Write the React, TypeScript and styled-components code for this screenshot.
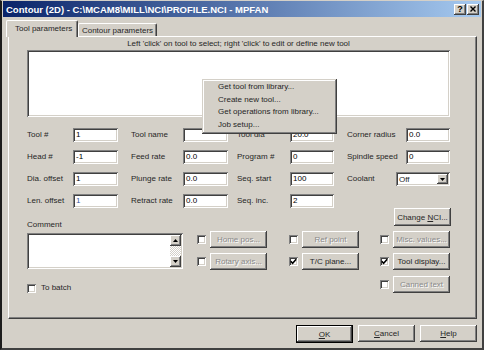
import styled, { createGlobalStyle, css } from 'styled-components'

const GlobalStyle = createGlobalStyle`
  html, body {
    margin: 0;
    padding: 0;
    background: #d4d0c8;
  }
  body {
    font-family: "Liberation Sans", Arial, sans-serif;
    font-size: 8px;
    color: #262626;
  }
`

const raised = css`
  background: #d4d0c8;
  box-shadow: inset -1px -1px #404040, inset 1px 1px #ffffff, inset -2px -2px #808080, inset 2px 2px #d4d0c8;
`

const sunken = css`
  background: #fff;
  box-shadow: inset 1px 1px #808080, inset -1px -1px #ffffff, inset 2px 2px #404040, inset -2px -2px #d4d0c8;
`

const Window = styled.div`
  width: 484px;
  height: 350px;
  box-sizing: border-box;
  background: #d4d0c8;
  border-top: 1px solid #d4d0c8;
  border-left: 2px solid #1c1c1c;
  border-right: 2px solid #404040;
  border-bottom: 2px solid #404040;
  display: flex;
  flex-direction: column;
  overflow: hidden;
`

const TitleBar = styled.div`
  height: 16px;
  margin: 0 1px;
  padding: 0 2px 0 3px;
  background: linear-gradient(to right, #0a246a, #a6caf0);
  display: flex;
  align-items: center;
  justify-content: space-between;
`

const TitleText = styled.span`
  color: #fff;
  font-weight: bold;
  font-size: 9.5px;
  white-space: nowrap;
`

const CaptionButtons = styled.div`
  display: flex;
  gap: 1px;
`

const CaptionButton = styled.div`
  ${raised}
  width: 12px;
  height: 11px;
  display: flex;
  align-items: center;
  justify-content: center;
  font-weight: bold;
  font-size: 9px;
  line-height: 11px;
  color: #000;
`

const Body = styled.div`
  flex: 1;
  display: flex;
  flex-direction: column;
  padding: 0 5px 5px 6px;
`

const TabStrip = styled.div`
  height: 19px;
  display: flex;
  align-items: flex-end;
  margin-left: -2px;
`

const Tab = styled.div<{ $active?: boolean }>`
  box-sizing: border-box;
  background: #d4d0c8;
  border-top: 1px solid #fff;
  border-left: 1px solid #fff;
  border-right: 1px solid #404040;
  border-radius: 2px 2px 0 0;
  box-shadow: inset -1px 0 #808080;
  white-space: nowrap;
  ${p =>
    p.$active
      ? css`
          width: 72px;
          height: 17px;
          margin-bottom: -1px;
          padding: 3px 0 0 8px;
          position: relative;
          z-index: 1;
        `
      : css`
          width: 79px;
          height: 13px;
          padding-top: 2px;
          text-align: center;
        `}
`

const Panel = styled.div`
  flex: 1;
  position: relative;
  display: flex;
  flex-direction: column;
  padding: 0 26px 0 18px;
  border-top: 1px solid #fff;
  border-left: 1px solid #fff;
  border-right: 1px solid #404040;
  border-bottom: 1px solid #404040;
  box-shadow: inset -1px -1px #808080;
`

const Hint = styled.div`
  margin-top: 2px;
  height: 10px;
  line-height: 10px;
  text-align: center;
  white-space: nowrap;
`

const ToolList = styled.div`
  ${sunken}
  margin-top: 1px;
  height: 67px;
`

const FormGrid = styled.div`
  margin-top: 11px;
  display: grid;
  grid-template-columns: 46px 58px 52px 54px 53px 57px 49px 54px;
  grid-auto-rows: 14px;
  row-gap: 8px;
  align-items: center;
`

const Label = styled.span`
  line-height: 14px;
  white-space: nowrap;
`

const Field = styled.div<{ $w: number; $end?: boolean; $tint?: boolean }>`
  ${sunken}
  box-sizing: border-box;
  width: ${p => p.$w}px;
  height: 14px;
  padding: 2px 0 0 3px;
  line-height: 10px;
  color: ${p => (p.$tint ? '#3a5a9a' : '#000')};
  justify-self: ${p => (p.$end ? 'end' : 'start')};
`

const Select = styled.div`
  ${sunken}
  box-sizing: border-box;
  width: 54px;
  height: 14px;
  display: flex;
  align-items: center;
  padding: 0 2px 0 3px;
  justify-content: space-between;
`

const DropButton = styled.div`
  ${raised}
  width: 11px;
  height: 10px;
  display: flex;
  align-items: center;
  justify-content: center;
`

const Lower = styled.div`
  display: grid;
  grid-template-columns: 170px 92px 91px 71px;
  grid-template-rows: 18px 17px 17px 18px;
  row-gap: 5px;
  align-items: center;
`

const CommentColumn = styled.div`
  grid-column: 1;
  grid-row: 1 / 5;
  align-self: stretch;
  display: flex;
  flex-direction: column;
  padding-top: 12px;
`

const CommentLabel = styled.span`
  line-height: 10px;
`

const CommentBox = styled.div`
  ${sunken}
  width: 156px;
  height: 36px;
  margin-top: 3px;
  box-sizing: border-box;
  padding: 2px;
  display: flex;
  justify-content: flex-end;
`

const ScrollBar = styled.div`
  width: 11px;
  display: flex;
  flex-direction: column;
`

const ScrollTrack = styled.div`
  flex: 1;
  background-color: #fff;
  background-image: repeating-conic-gradient(#d4d0c8 0 25%, #fff 0 50%);
  background-size: 2px 2px;
`

const ScrollArrow = styled.div`
  ${raised}
  height: 11px;
  display: flex;
  align-items: center;
  justify-content: center;
`

const CheckRow = styled.label`
  display: flex;
  align-items: center;
  gap: 5px;
  margin-top: 14px;
  line-height: 10px;
`

const CheckBox = styled.div`
  ${sunken}
  width: 9px;
  height: 9px;
  flex: none;
  display: flex;
  align-items: center;
  justify-content: center;
`

const OptionGroup = styled.div<{ $col: number; $row: number }>`
  grid-column: ${p => p.$col};
  grid-row: ${p => p.$row};
  display: flex;
  align-items: center;
  gap: 4px;
`

const Button = styled.button<{ $disabled?: boolean; $default?: boolean }>`
  ${raised}
  border: none;
  margin: 0;
  padding: 0;
  width: 57px;
  height: 17px;
  font-family: "Liberation Sans", Arial, sans-serif;
  font-size: 8px;
  white-space: nowrap;
  color: ${p => (p.$disabled ? '#8a8a8a' : '#262626')};
  text-shadow: ${p => (p.$disabled ? '1px 1px 0 #fff' : 'none')};
  ${p =>
    p.$default &&
    css`
      height: 18px;
      box-shadow: inset 0 0 0 1px #000, inset -2px -2px #404040, inset 2px 2px #ffffff, inset -3px -3px #808080;
    `}
`

const ChangeButton = styled(Button)`
  grid-column: 4;
  grid-row: 1;
  justify-self: end;
  height: 18px;
`

const ButtonRow = styled.div`
  margin-top: 6px;
  display: flex;
  justify-content: flex-end;
  gap: 5px;
`

const ContextMenu = styled.div`
  position: absolute;
  left: 193px;
  top: 42px;
  width: 135px;
  box-sizing: border-box;
  padding: 2px 0 3px;
  background: #d4d0c8;
  box-shadow: inset -1px -1px #404040, inset 1px 1px #d4d0c8, inset -2px -2px #808080, inset 2px 2px #ffffff;
  z-index: 5;
`

const MenuItem = styled.div`
  height: 12.5px;
  line-height: 12.5px;
  padding-left: 16px;
  white-space: nowrap;
`

type Cell = { label: string; value?: string; w: number; end?: boolean; select?: boolean; tint?: boolean }

const rows: Cell[][] = [
  [
    { label: 'Tool #', value: '1', w: 45 },
    { label: 'Tool name', value: '', w: 45 },
    { label: 'Tool dia', value: '20.0', w: 44 },
    { label: 'Corner radius', value: '0.0', w: 44, end: true },
  ],
  [
    { label: 'Head #', value: '-1', w: 45 },
    { label: 'Feed rate', value: '0.0', w: 45 },
    { label: 'Program #', value: '0', w: 44 },
    { label: 'Spindle speed', value: '0', w: 44, end: true },
  ],
  [
    { label: 'Dia. offset', value: '1', w: 45 },
    { label: 'Plunge rate', value: '0.0', w: 45 },
    { label: 'Seq. start', value: '100', w: 44 },
    { label: 'Coolant', w: 54, select: true },
  ],
  [
    { label: 'Len. offset', value: '1', w: 45, tint: true },
    { label: 'Retract rate', value: '0.0', w: 45 },
    { label: 'Seq. inc.', value: '2', w: 44 },
  ],
]

const options = [
  { col: 2, row: 2, text: 'Home pos...', checked: false, disabled: true },
  { col: 3, row: 2, text: 'Ref point', checked: false, disabled: true },
  { col: 4, row: 2, text: 'Misc. values...', checked: false, disabled: true },
  { col: 2, row: 3, text: 'Rotary axis...', checked: false, disabled: true },
  { col: 3, row: 3, text: 'T/C plane...', checked: true, disabled: false },
  { col: 4, row: 3, text: 'Tool display...', checked: true, disabled: false },
  { col: 4, row: 4, text: 'Canned text', checked: false, disabled: true },
]

const Check = () => (
  <svg width="7" height="7" viewBox="0 0 7 7">
    <polyline points="0.8,3.2 2.6,5.2 6.2,1.2" fill="none" stroke="#000" strokeWidth="1.6" />
  </svg>
)

const Arrow = ({ up }: { up?: boolean }) => (
  <svg width="5" height="3" viewBox="0 0 5 3">
    <polygon points={up ? '0,3 5,3 2.5,0' : '0,0 5,0 2.5,3'} fill="#000" />
  </svg>
)

export default function App() {
  return (
    <>
      <GlobalStyle />
      <Window>
        <TitleBar>
          <TitleText>Contour (2D) - C:\MCAM8\MILL\NCI\PROFILE.NCI - MPFAN</TitleText>
          <CaptionButtons>
            <CaptionButton>?</CaptionButton>
            <CaptionButton>
              <svg width="6" height="6" viewBox="0 0 6 6">
                <path d="M0.5 0.5 L5.5 5.5 M5.5 0.5 L0.5 5.5" stroke="#000" strokeWidth="1.4" />
              </svg>
            </CaptionButton>
          </CaptionButtons>
        </TitleBar>
        <Body>
          <TabStrip>
            <Tab $active>Tool parameters</Tab>
            <Tab>Contour parameters</Tab>
          </TabStrip>
          <Panel>
            <Hint>Left 'click' on tool to select; right 'click' to edit or define new tool</Hint>
            <ToolList />
            <FormGrid>
              {rows.map(row =>
                row.map(cell => [
                  <Label key={cell.label + '-l'}>{cell.label}</Label>,
                  cell.select ? (
                    <Select key={cell.label + '-f'}>
                      <span>Off</span>
                      <DropButton>
                        <Arrow />
                      </DropButton>
                    </Select>
                  ) : (
                    <Field key={cell.label + '-f'} $w={cell.w} $end={cell.end} $tint={cell.tint}>
                      {cell.value}
                    </Field>
                  ),
                ])
              )}
            </FormGrid>
            <Lower>
              <CommentColumn>
                <CommentLabel>Comment</CommentLabel>
                <CommentBox>
                  <ScrollBar>
                    <ScrollArrow>
                      <Arrow up />
                    </ScrollArrow>
                    <ScrollTrack />
                    <ScrollArrow>
                      <Arrow />
                    </ScrollArrow>
                  </ScrollBar>
                </CommentBox>
                <CheckRow>
                  <CheckBox />
                  To batch
                </CheckRow>
              </CommentColumn>
              <ChangeButton>
                Change <u>N</u>CI...
              </ChangeButton>
              {options.map(o => (
                <OptionGroup key={o.text} $col={o.col} $row={o.row}>
                  <CheckBox>{o.checked && <Check />}</CheckBox>
                  <Button $disabled={o.disabled}>{o.text}</Button>
                </OptionGroup>
              ))}
            </Lower>
            <ContextMenu>
              <MenuItem>Get tool from library...</MenuItem>
              <MenuItem>Create new tool...</MenuItem>
              <MenuItem>Get operations from library...</MenuItem>
              <MenuItem>Job setup...</MenuItem>
            </ContextMenu>
          </Panel>
          <ButtonRow>
            <Button $default>
              <u>O</u>K
            </Button>
            <Button>
              <u>C</u>ancel
            </Button>
            <Button>
              <u>H</u>elp
            </Button>
          </ButtonRow>
        </Body>
      </Window>
    </>
  )
}
